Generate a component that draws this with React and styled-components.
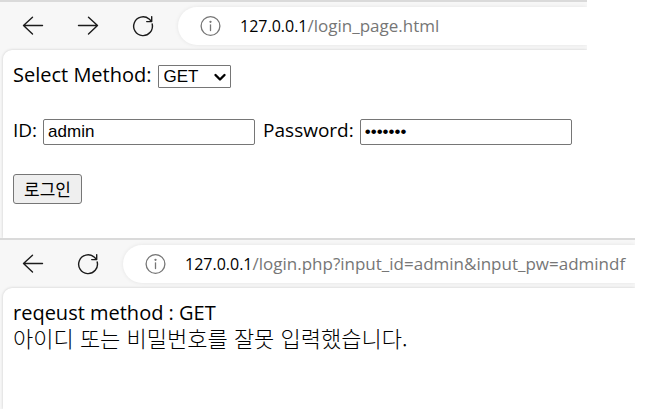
import React, { useState } from "react";
import styled, { createGlobalStyle } from "styled-components";

const GlobalStyle = createGlobalStyle`
  * { box-sizing: border-box; }
  body {
    margin: 0;
    background: #fff;
    color: #000;
    font-family: "Open Sans", "Noto Sans CJK KR", sans-serif;
    font-size: 20px;
    line-height: 26px;
  }
`;

const Window = styled.section`
  margin-right: ${(p) => p.$inset}px;
  background: #f7f7f7;
  border-top: 2px solid #dadada;
  overflow: hidden;
`;

const Toolbar = styled.header`
  display: flex;
  align-items: center;
  height: 48px;
  padding: 5px 0 5px 21px;
  gap: 31px;
`;

const NavButton = styled.button`
  display: flex;
  flex: none;
  width: 24px;
  height: 24px;
  padding: 0;
  border: 0;
  background: none;
  color: #1b1b1b;
`;

const Address = styled.div`
  display: flex;
  flex: 1;
  align-items: center;
  gap: 18px;
  height: 38px;
  min-width: 0;
  margin-left: -8px;
  padding-left: 20px;
  border-radius: 19px 0 0 19px;
  background: #fff;
  box-shadow: 0 0 4px rgba(0, 0, 0, 0.08);
  color: #767676;
  font-size: 17px;
  line-height: 24px;
  white-space: nowrap;
`;

const Host = styled.span`
  color: #000;
  font-size: 16px;
`;

const Page = styled.main`
  min-height: ${(p) => p.$height}px;
  margin-left: 3px;
  padding: 12px 0 12px 10px;
  border-radius: 9px 0 0 0;
  background: #fff;
  box-shadow: 0 0 3px rgba(0, 0, 0, 0.18);
`;

const Form = styled.form`
  display: flex;
  flex-direction: column;
  align-items: flex-start;
  gap: 29px;
`;

const Row = styled.div`
  display: flex;
  align-items: baseline;
  gap: 8px;
  font-size: 19px;
  white-space: nowrap;
`;

const Field = styled.label`
  display: flex;
  align-items: baseline;
  gap: 6px;
`;

const SelectFrame = styled.span`
  display: grid;
  align-items: center;
  width: 73px;
  height: 23px;

  > * { grid-area: 1 / 1; }
  > svg { justify-self: end; margin-right: 4px; pointer-events: none; }
`;

const Select = styled.select`
  appearance: none;
  width: 100%;
  height: 23px;
  padding: 0 0 0 5px;
  border: 1px solid #767676;
  border-radius: 1px;
  background: #fff;
  color: #000;
  font-family: "Liberation Sans", Arial, sans-serif;
  font-size: 17px;
  line-height: 21px;
`;

const Input = styled.input`
  width: 212px;
  height: 26px;
  padding: 1px 4px;
  border: 1px solid #767676;
  border-radius: 2px;
  background: #fff;
  color: #000;
  font-family: "Liberation Sans", Arial, sans-serif;
  font-size: 17px;
`;

const Submit = styled.button`
  height: 30px;
  padding: 0 10px;
  border: 1px solid #767676;
  border-radius: 3px;
  background: #efefef;
  color: #000;
  font-family: "Noto Sans CJK KR", sans-serif;
  font-size: 17px;
  line-height: 26px;
`;

const Message = styled.p`
  margin: 0;
`;

const KoreanMessage = styled(Message)`
  font-family: "Noto Sans CJK KR", sans-serif;
  font-size: 22px;
  font-weight: 300;
  line-height: 22px;
`;

const Icon = ({ size = 24, stroke = 1.4, children }) => (
  <svg width={size} height={size} viewBox={`0 0 ${size} ${size}`} fill="none" stroke="currentColor"
    strokeWidth={stroke} strokeLinecap="round" strokeLinejoin="round" aria-hidden="true">
    {children}
  </svg>
);

const Back = () => (
  <NavButton type="button" aria-label="Back">
    <Icon><path d="M21.5 11.5h-19M11.5 3.2l-9 8.3 9 8.5" /></Icon>
  </NavButton>
);

const Forward = () => (
  <NavButton type="button" aria-label="Forward">
    <Icon><path d="M2.5 11.5h19M12.5 3.2l9 8.3-9 8.5" /></Icon>
  </NavButton>
);

const Reload = () => (
  <NavButton type="button" aria-label="Reload">
    <Icon><path d="M21.2 10a9.4 9.4 0 1 1-3.1-5L20.7 7.6M20.7 2.6v5h-5" /></Icon>
  </NavButton>
);

const Info = () => (
  <Icon stroke={1.3}>
    <circle cx="12.5" cy="12" r="9.4" />
    <path d="M12.5 10.8v5.7" />
    <circle cx="12.5" cy="7.8" r="0.5" fill="currentColor" />
  </Icon>
);

const AddressBar = ({ host, path }) => (
  <Address>
    <Info />
    <span><Host>{host}</Host>{path}</span>
  </Address>
);

export default function App() {
  const [method, setMethod] = useState("GET");

  return (
    <>
      <GlobalStyle />
      <Window $inset={65}>
        <Toolbar>
          <Back />
          <Forward />
          <Reload />
          <AddressBar host="127.0.0.1" path="/login_page.html" />
        </Toolbar>
        <Page $height={188}>
          <Form onSubmit={(e) => e.preventDefault()}>
            <Field>
              Select Method:
              <SelectFrame>
                <Select value={method} onChange={(e) => setMethod(e.target.value)}>
                  <option>GET</option>
                  <option>POST</option>
                </Select>
                <Icon size={14} stroke={2.4}><path d="M2.5 5L7 9.5 11.5 5" /></Icon>
              </SelectFrame>
            </Field>
            <Row>
              <Field>ID:<Input type="text" name="input_id" defaultValue="admin" /></Field>
              <Field>Password:<Input type="password" name="input_pw" defaultValue="admindf" /></Field>
            </Row>
            <Submit type="submit">로그인</Submit>
          </Form>
        </Page>
      </Window>
      <Window $inset={17}>
        <Toolbar>
          <Back />
          <Reload />
          <AddressBar host="127.0.0.1" path="/login.php?input_id=admin&input_pw=admindf" />
        </Toolbar>
        <Page $height={121}>
          <Message>reqeust method : GET</Message>
          <KoreanMessage lang="ko">아이디 또는 비밀번호를 잘못 입력했습니다.</KoreanMessage>
        </Page>
      </Window>
    </>
  );
}
